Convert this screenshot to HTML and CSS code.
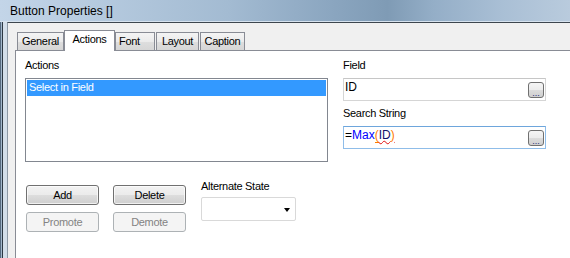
FILE: index.html
```html
<!DOCTYPE html>
<html>
<head>
<meta charset="utf-8">
<link rel="stylesheet" href="styles.css">
</head>
<body>
<div class="window">
  <div class="titlebar">Button Properties []</div>
  <div class="main">
    <div class="frame"></div>
    <div class="client">
      <div class="tabs">
        <div class="tab tab-general">General</div>
        <div class="tab tab-actions selected">Actions</div>
        <div class="tab tab-font">Font</div>
        <div class="tab tab-layout">Layout</div>
        <div class="tab tab-caption">Caption</div>
      </div>
      <div class="panel">
        <div class="top">
          <div class="col-left">
            <div class="label">Actions</div>
            <div class="listbox">
              <div class="list-item selected-item">Select in Field</div>
            </div>
          </div>
          <div class="col-right">
            <div class="label">Field</div>
            <div class="input">
              <span class="input-text">ID</span>
              <span class="ellipsis"><span class="dots">...</span></span>
            </div>
            <div class="label label-gap">Search String</div>
            <div class="input focused">
              <span class="input-text"><span class="op">=</span><span class="fn">Max</span><span class="brace">(</span><span class="squiggle"><span class="ident">ID</span><span class="brace2">)</span></span></span>
              <span class="ellipsis"><span class="dots">...</span></span>
            </div>
          </div>
        </div>
        <div class="bottom">
          <div class="buttons">
            <div class="btn">Add</div>
            <div class="btn">Delete</div>
            <div class="btn disabled">Promote</div>
            <div class="btn disabled">Demote</div>
          </div>
          <div class="alt-group">
            <div class="label">Alternate State</div>
            <div class="combo"><span class="arrow"></span></div>
          </div>
        </div>
      </div>
    </div>
  </div>
</div>
</body>
</html>
```

FILE: styles.css
```css
html, body {
  margin: 0;
  padding: 0;
}
body {
  width: 570px;
  height: 258px;
  overflow: hidden;
  background: #f0f0f0;
  font-family: "Liberation Sans", Arial, sans-serif;
  font-size: 11px;
  letter-spacing: -0.3px;
  color: #000;
}
.window {
  display: flex;
  flex-direction: column;
  height: 258px;
}
.titlebar {
  flex: none;
  height: 22px;
  box-sizing: border-box;
  padding-left: 10px;
  padding-top: 1px;
  line-height: 20px;
  font-size: 12px;
  letter-spacing: 0;
  color: #000;
  background: linear-gradient(to right, #c3d5e8 0%, #b3c8dd 20%, #a3bbd2 40%, #8ba6c0 58%, #7f9bb5 68%, #94aec7 76%, #a9bfd5 88%, #b9cbdd 100%);
  border-bottom: 1px solid #d6e2ee;
}
.main {
  flex: 1;
  display: flex;
  min-height: 0;
}
.frame {
  flex: none;
  width: 7px;
  background: linear-gradient(to right, #55697e 0 1px, #a3b8cc 1px 2px, #2d3843 2px 3px, #d3dee9 3px 7px);
}
.client {
  flex: 1;
  display: flex;
  flex-direction: column;
  background: #f0f0f0;
  border-top: 1px solid #3d464e;
  border-left: 1px solid #8d99a5;
  padding: 7px 0 0 7px;
}
.tabs {
  display: flex;
  align-items: flex-end;
  height: 20px;
  padding-left: 2px;
}
.tab {
  box-sizing: border-box;
  height: 18px;
  line-height: 16px;
  border: 1px solid #898c95;
  border-bottom: none;
  background: linear-gradient(to bottom, #f4f4f4 0%, #ebebeb 50%, #dedede 51%, #d6d6d6 100%);
  text-align: center;
}
.tab.selected {
  position: relative;
  z-index: 1;
  height: 21px;
  margin-bottom: -1px;
  background: #fff;
}
.tab-general { width: 47px; }
.tab-actions { width: 51px; }
.tab-font { width: 40px; text-align: left; padding-left: 3px; }
.tab-layout { width: 43px; margin-left: 1px; }
.tab-caption { width: 45px; margin-left: 1px; }
.panel {
  flex: 1;
  background: #fff;
  border-top: 1px solid #898c95;
  border-left: 1px solid #898c95;
  padding: 8px 0 0 9px;
}
.top {
  display: flex;
  align-items: flex-start;
  gap: 15px;
}
.col-left {
  width: 303px;
}
.col-right {
  width: 203px;
}
.label {
  line-height: 13px;
  margin-bottom: 6px;
}
.label-gap {
  margin-top: 6px;
}
.listbox {
  box-sizing: border-box;
  height: 84px;
  border: 1px solid #828790;
  padding: 1px;
}
.list-item {
  height: 16px;
  line-height: 14px;
  padding-left: 2px;
}
.selected-item {
  background: #3399ff;
  color: #fff;
}
.input {
  box-sizing: border-box;
  height: 23px;
  border: 1px solid #d5d5d5;
  border-top-color: #c6c6c6;
  display: flex;
  align-items: center;
  justify-content: space-between;
  padding: 0 1px 0 1px;
}
.input.focused {
  border-color: #8fbde9;
  border-top-color: #6ea6dc;
}
.input-text {
  align-self: flex-start;
  margin-top: 1px;
  line-height: 14px;
  font-size: 12px;
  letter-spacing: 0;
}
.op { color: #000; }
.fn { color: #0000ff; }
.brace {
  color: #ff7b00;
  border-bottom: 1px solid #ff7b00;
}
.ident { color: #10106a; }
.brace2 { color: #ff7b00; }
.squiggle {
  text-decoration: underline wavy #e01010;
  text-decoration-thickness: 1px;
  text-underline-offset: 1px;
}
.ellipsis {
  box-sizing: border-box;
  width: 16px;
  height: 16px;
  border: 1px solid #707070;
  border-radius: 3px;
  background: linear-gradient(to bottom, #f5f5f5 0%, #ececec 50%, #dcdcdc 51%, #cfcfcf 100%);
  display: flex;
  justify-content: center;
  align-items: flex-end;
}
.dots {
  font-size: 9px;
  line-height: 8px;
  letter-spacing: 0;
  color: #1c2d7a;
}
.bottom {
  display: flex;
  align-items: flex-start;
  gap: 15px;
  margin-top: 18px;
}
.buttons {
  display: grid;
  grid-template-columns: 73px 73px;
  grid-auto-rows: 20px;
  column-gap: 14px;
  row-gap: 7px;
  margin-top: 5px;
  margin-left: 1px;
}
.btn {
  box-sizing: border-box;
  border: 1px solid #707070;
  border-radius: 3px;
  background: linear-gradient(to bottom, #f2f2f2 0%, #ebebeb 50%, #dddddd 51%, #cfcfcf 100%);
  box-shadow: inset 0 0 0 1px rgba(255, 255, 255, 0.7);
  text-align: center;
  line-height: 18px;
}
.btn.disabled {
  border-color: #adb2b5;
  background: #f4f4f4;
  box-shadow: none;
  color: #838383;
}
.alt-group .label {
  margin-bottom: 4px;
}
.combo {
  box-sizing: border-box;
  width: 95px;
  height: 24px;
  border: 1px solid #d9d9d9;
  border-radius: 2px;
  background: #fff;
  display: flex;
  align-items: center;
  justify-content: flex-end;
  padding-right: 5px;
}
.arrow {
  width: 0;
  height: 0;
  border-left: 3.5px solid transparent;
  border-right: 3.5px solid transparent;
  border-top: 4px solid #000;
  margin-top: 1px;
}
```
